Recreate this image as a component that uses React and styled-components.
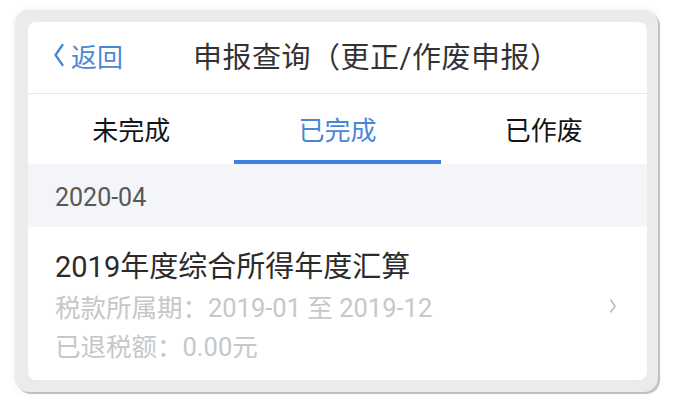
import styled, { createGlobalStyle } from "styled-components";

const GlobalStyle = createGlobalStyle`
  html, body {
    margin: 0;
    padding: 0;
    background: #ffffff;
  }
  body {
    font-family: Roboto, "Noto Sans CJK SC", "Noto Sans", sans-serif;
  }
`;

const Page = styled.div`
  width: 674px;
  height: 409px;
  padding: 10px 0 0 15px;
  box-sizing: border-box;
`;

const Frame = styled.div`
  width: 643px;
  height: 382px;
  box-sizing: border-box;
  padding: 12px 11px 12px 13px;
  background: #eaebeb;
  border-radius: 14px;
  box-shadow: 0 0 6px rgba(0, 0, 0, 0.08), 2px 2px 0 #c6c8c8;
`;

const Screen = styled.div`
  height: 100%;
  background: #ffffff;
  border-radius: 8px;
  overflow: hidden;
  display: flex;
  flex-direction: column;
`;

const Header = styled.div`
  height: 72px;
  flex-shrink: 0;
  box-sizing: border-box;
  display: flex;
  align-items: center;
  padding: 0 0 5px 24px;
  border-bottom: 1px solid #e6e6e6;
`;

const BackLink = styled.a`
  display: flex;
  align-items: center;
  gap: 5px;
  color: #4a86d8;
  font-size: 26px;
  text-decoration: none;
  width: 141px;
`;

const Title = styled.div`
  font-size: 29px;
  color: #333333;
  letter-spacing: 0.5px;
`;

const Tabs = styled.div`
  height: 70px;
  flex-shrink: 0;
  display: grid;
  grid-template-columns: repeat(3, 1fr);
`;

const Tab = styled.div`
  display: flex;
  align-items: center;
  justify-content: center;
  font-size: 26px;
  color: ${(p) => (p.$active ? "#4a86d8" : "#151515")};
  border-bottom: 4px solid ${(p) => (p.$active ? "#3f80e2" : "transparent")};
  padding-top: 2px;
`;

const Section = styled.div`
  height: 63px;
  flex-shrink: 0;
  box-sizing: border-box;
  background: #f4f5f8;
  display: flex;
  align-items: center;
  padding: 4px 0 0 27px;
  font-size: 25px;
  color: #585858;
`;

const Item = styled.div`
  display: flex;
  align-items: center;
  padding: 18px 30px 0 27px;
`;

const ItemBody = styled.div`
  flex: 1;
  display: flex;
  flex-direction: column;
`;

const ItemTitle = styled.div`
  font-size: 29px;
  line-height: 44px;
  color: #2b2b2b;
`;

const ItemLine = styled.div`
  font-size: 25.5px;
  line-height: 39px;
  color: #c6c7c9;
`;

function Chevron({ dir = "right", w = 12, h = 20, color = "#c0c0c0", width = 2 }) {
  const d = dir === "left" ? "10,2 3,12 10,22" : "3,2 10,12 3,22";
  return (
    <svg width={w} height={h} viewBox="0 0 13 24">
      <polyline points={d} fill="none" stroke={color} strokeWidth={width} strokeLinecap="round" strokeLinejoin="round" />
    </svg>
  );
}

export default function App() {
  return (
    <>
      <GlobalStyle />
      <Page>
        <Frame>
          <Screen>
            <Header>
              <BackLink href="#">
                <Chevron dir="left" w={14} h={24} color="#4a86d8" width={2.3} />
                <span>返回</span>
              </BackLink>
              <Title>申报查询（更正/作废申报）</Title>
            </Header>
            <Tabs>
              <Tab>未完成</Tab>
              <Tab $active>已完成</Tab>
              <Tab>已作废</Tab>
            </Tabs>
            <Section>2020-04</Section>
            <Item>
              <ItemBody>
                <ItemTitle>2019年度综合所得年度汇算</ItemTitle>
                <ItemLine>税款所属期：2019-01 至 2019-12</ItemLine>
                <ItemLine>已退税额：0.00元</ItemLine>
              </ItemBody>
              <Chevron w={8} h={14} color="#bdbdbd" width={3} />
            </Item>
          </Screen>
        </Frame>
      </Page>
    </>
  );
}
